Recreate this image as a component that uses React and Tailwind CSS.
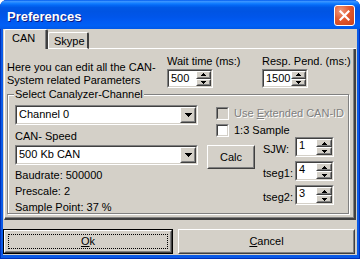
import React from "react";

const F = "font-['Liberation_Sans',Arial,sans-serif]";
const RO = "border border-t-white border-l-white border-r-[#404040] border-b-[#404040]";
const RI = "border border-t-[#d4d0c8] border-l-[#d4d0c8] border-r-[#808080] border-b-[#808080]";
const SO = "border border-t-[#808080] border-l-[#808080] border-r-white border-b-white";
const SI = "border border-t-[#404040] border-l-[#404040] border-r-[#d4d0c8] border-b-[#d4d0c8]";

function Tri({ up }) {
  return (
    <svg width="5" height="3" viewBox="0 0 5 3" shapeRendering="crispEdges">
      {up ? (
        <g fill="#000">
          <rect x="2" y="0" width="1" height="1" />
          <rect x="1" y="1" width="3" height="1" />
          <rect x="0" y="2" width="5" height="1" />
        </g>
      ) : (
        <g fill="#000">
          <rect x="0" y="0" width="5" height="1" />
          <rect x="1" y="1" width="3" height="1" />
          <rect x="2" y="2" width="1" height="1" />
        </g>
      )}
    </svg>
  );
}

function DownArrow() {
  return (
    <svg width="7" height="4" viewBox="0 0 7 4" shapeRendering="crispEdges">
      <g fill="#000">
        <rect x="0" y="0" width="7" height="1" />
        <rect x="1" y="1" width="5" height="1" />
        <rect x="2" y="2" width="3" height="1" />
        <rect x="3" y="3" width="1" height="1" />
      </g>
    </svg>
  );
}

function SpinBtn({ up }) {
  return (
    <div className={`flex-1 flex flex-col min-h-0 ${RO}`}>
      <div className={`flex-1 flex items-center justify-center min-h-0 bg-[#d4d0c8] ${RI}`}>
        <Tri up={up} />
      </div>
    </div>
  );
}

function Spin({ value, box, btnW, pad }) {
  return (
    <div className={`flex ${SO} ${box}`}>
      <div className={`flex flex-1 bg-white ${SI}`}>
        <span className={`flex-1 leading-[13px] ${pad}`}>{value}</span>
        <div className={`flex flex-col ${btnW}`}>
          <SpinBtn up />
          <SpinBtn />
        </div>
      </div>
    </div>
  );
}

function Combo({ text }) {
  return (
    <div className={`flex h-[20px] ${SO}`}>
      <div className={`flex flex-1 bg-white ${SI}`}>
        <span className="flex-1 pl-[2px] pt-[1px] leading-[13px]">{text}</span>
        <div className={`flex flex-col w-[16px] ${RO}`}>
          <div className={`flex-1 flex items-center justify-center bg-[#d4d0c8] ${RI}`}>
            <DownArrow />
          </div>
        </div>
      </div>
    </div>
  );
}

function Check({ disabled, label }) {
  return (
    <div className="flex items-start">
      <div className={`w-[13px] h-[13px] flex ${SO}`}>
        <div className={`flex-1 ${SI} ${disabled ? "bg-[#d4d0c8]" : "bg-white"}`} />
      </div>
      <span
        className={`ml-[5px] leading-[13px] ${
          disabled ? "text-[#808080] [text-shadow:1px_1px_0_#ffffff]" : ""
        }`}
      >
        {label}
      </span>
    </div>
  );
}

export default function App() {
  return (
    <div
      className={`${F} text-[11px] text-black w-[360px] h-[259px] flex flex-col bg-[#0a5ae6] rounded-t-[7px] overflow-hidden shadow-[inset_1px_0_0_#0030b8,inset_-1px_0_0_#0030b8,inset_0_-1px_0_#0030b8]`}
    >
      {/* Title bar */}
      <div className="h-[29px] shrink-0 flex items-start bg-[linear-gradient(180deg,#0058ee_0%,#3a93ff_5%,#2a8cff_8%,#127dff_12%,#0468f5_18%,#0058e6_26%,#0054e3_40%,#0056eb_60%,#005bf3_75%,#0060f5_88%,#0058e8_100%)]">
        <span className="ml-[7px] mt-[9px] text-[13px] leading-[16px] font-bold text-white [text-shadow:1px_1px_0_#0a1883]">
          Preferences
        </span>
        <div className="ml-auto mr-[5px] mt-[5px] w-[21px] h-[21px] rounded-[3px] border border-white flex items-center justify-center bg-[radial-gradient(circle_at_30%_25%,#f09a7c_0%,#e2592f_45%,#c8401a_100%)]">
          <svg width="11" height="11" viewBox="0 0 11 11">
            <path d="M1.5 1.5 L9.5 9.5 M9.5 1.5 L1.5 9.5" stroke="#fff" strokeWidth="2.2" strokeLinecap="square" />
          </svg>
        </div>
      </div>

      {/* Body */}
      <div className="flex-1 mx-[3px] mb-[4px] bg-[#d4d0c8] flex flex-col">
        {/* Tabs */}
        <div className="h-[20px] ml-[1px] mr-[1px] flex items-end">
          <div className="h-[20px] w-[44px] border-l border-t border-white border-r-2 border-r-[#404040] rounded-tl-[2px] rounded-tr-[2px] pl-[7px] pt-[2px] leading-[13px] shadow-[inset_-1px_0_0_#808080]">
            CAN
          </div>
          <div className="h-[17px] w-[41px] border-l border-t border-b border-white border-r-2 border-r-[#404040] border-b-white rounded-tl-[2px] rounded-tr-[2px] pl-[5px] pt-[2px] leading-[13px]">
            Skype
          </div>
          <div className="flex-1 h-[1px] bg-white" />
        </div>

        {/* Panel */}
        <div className="h-[171px] ml-[1px] mr-[1px] border-l border-white border-r-2 border-b-2 border-r-[#404040] border-b-[#404040] shadow-[inset_-1px_-1px_0_#808080] flex flex-col">
          {/* top area */}
          <div className="h-[45px] flex">
            <div className="ml-[2px] w-[160px] mt-[12px] leading-[13px]">
              Here you can edit all the CAN-
              <br />
              System related Parameters
            </div>
            <div className="w-[95px] flex flex-col">
              <span className="mt-[6px] leading-[13px]">Wait time (ms:)</span>
              <Spin value="500" box="mt-[1px] w-[46px] h-[19px]" btnW="w-[15px]" pad="pl-[2px] pt-[1px]" />
            </div>
            <div className="flex flex-col">
              <span className="mt-[6px] leading-[13px]">Resp. Pend. (ms:)</span>
              <Spin value="1500" box="mt-[1px] w-[46px] h-[19px]" btnW="w-[15px]" pad="pl-[2px] pt-[1px]" />
            </div>
          </div>

          {/* Group box */}
          <div className="relative ml-[2px] w-[342px] h-[120px] border border-[#808080] shadow-[inset_1px_1px_0_#ffffff,1px_1px_0_#ffffff] flex">
            <span className="absolute left-[6px] -top-[7px] px-[1px] bg-[#d4d0c8] leading-[13px]">
              Select Canalyzer-Channel
            </span>
            {/* left column */}
            <div className="ml-[7px] w-[183px] flex flex-col">
              <div className="mt-[10px]">
                <Combo text="Channel 0" />
              </div>
              <span className="mt-[5px] leading-[13px]">CAN- Speed</span>
              <div className="mt-[2px]">
                <Combo text="500 Kb CAN" />
              </div>
              <div className="mt-[2px] flex flex-col leading-[16px]">
                <span>Baudrate: 500000</span>
                <span>Prescale: 2</span>
                <span>Sample Point: 37 %</span>
              </div>
            </div>
            {/* right column */}
            <div className="ml-[9px] flex flex-col">
              <div className="ml-[9px] mt-[12px]">
                <Check
                  disabled
                  label={
                    <>
                      Use <u>E</u>xtended CAN-ID
                    </>
                  }
                />
              </div>
              <div className="ml-[9px] mt-[4px]">
                <Check label="1:3 Sample" />
              </div>
              <div className="flex items-start">
                <div className={`mt-[8px] w-[48px] h-[24px] flex flex-col ${RO}`}>
                  <div className={`flex-1 flex items-center justify-center leading-[13px] ${RI}`}>Calc</div>
                </div>
                <div className="ml-[8px] flex flex-col gap-[4px]">
                  <div className="flex items-end">
                    <span className="w-[32px] leading-[13px] mb-[1px]">SJW:</span>
                    <Spin value="1" box="w-[39px] h-[20px]" btnW="w-[16px]" pad="pl-[2px] pt-[0px]" />
                  </div>
                  <div className="flex items-end">
                    <span className="w-[32px] leading-[13px] mb-[1px]">tseg1:</span>
                    <Spin value="4" box="w-[39px] h-[20px]" btnW="w-[16px]" pad="pl-[2px] pt-[0px]" />
                  </div>
                  <div className="flex items-end">
                    <span className="w-[32px] leading-[13px] mb-[1px]">tseg2:</span>
                    <Spin value="3" box="w-[39px] h-[20px]" btnW="w-[16px]" pad="pl-[2px] pt-[0px]" />
                  </div>
                </div>
              </div>
            </div>
          </div>
        </div>

        {/* Buttons */}
        <div className="mt-[9px] h-[25px] flex">
          <div className="w-[170px] border border-black flex flex-col">
            <div className={`flex-1 flex flex-col ${RO}`}>
              <div className={`flex-1 flex p-[2px] ${RI}`}>
                <div className="flex-1 border border-dotted border-black flex items-center justify-center leading-[13px]">
                  <span>
                    <u>O</u>k
                  </span>
                </div>
              </div>
            </div>
          </div>
          <div className={`ml-[5px] w-[177px] flex flex-col ${RO}`}>
            <div className={`flex-1 flex items-center justify-center leading-[13px] ${RI}`}>
              <span>
                <u>C</u>ancel
              </span>
            </div>
          </div>
        </div>
      </div>
    </div>
  );
}
